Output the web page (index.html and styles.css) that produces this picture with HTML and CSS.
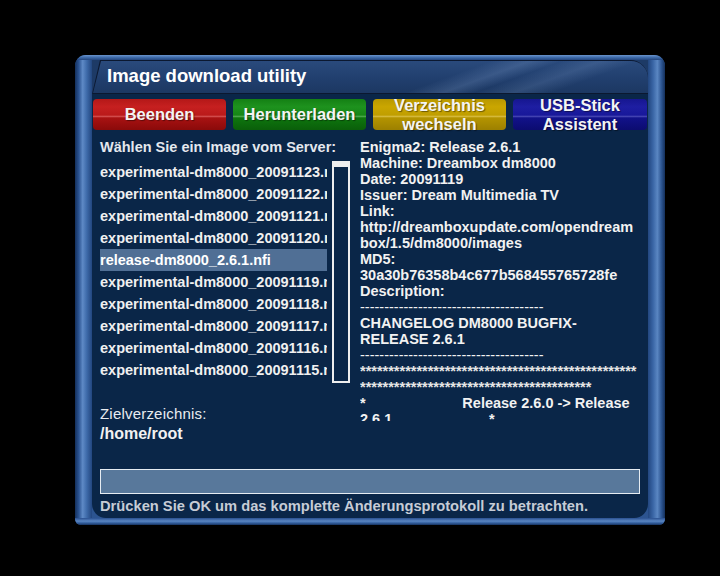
FILE: index.html
```html
<!DOCTYPE html>
<html lang="de">
<head>
<meta charset="utf-8">
<title>Image download utility</title>
<link rel="stylesheet" href="styles.css">
</head>
<body>
<div class="frame">
  <div class="edge edge-top"></div>
  <div class="edge edge-left"></div>
  <div class="panel">
    <div class="title-row">
      <div class="title-outline">
        <div class="title">Image download utility</div>
      </div>
    </div>
    <div class="body">
      <div class="buttons">
        <div class="btn red">Beenden</div>
        <div class="btn green">Herunterladen</div>
        <div class="btn yellow">Verzeichnis<br>wechseln</div>
        <div class="btn blue">USB-Stick<br>Assistent</div>
      </div>
      <div class="main">
        <div class="left">
          <div class="label">Wählen Sie ein Image vom Server:</div>
          <div class="listwrap">
            <ul class="list">
              <li>experimental-dm8000_20091123.nfi</li>
              <li>experimental-dm8000_20091122.nfi</li>
              <li>experimental-dm8000_20091121.nfi</li>
              <li>experimental-dm8000_20091120.nfi</li>
              <li class="selected">release-dm8000_2.6.1.nfi</li>
              <li>experimental-dm8000_20091119.nfi</li>
              <li>experimental-dm8000_20091118.nfi</li>
              <li>experimental-dm8000_20091117.nfi</li>
              <li>experimental-dm8000_20091116.nfi</li>
              <li>experimental-dm8000_20091115.nfi</li>
            </ul>
            <div class="scrollbar"><div class="thumb"></div></div>
          </div>
          <div class="dest-label">Zielverzeichnis:</div>
          <div class="dest">/home/root</div>
        </div>
        <div class="info">
          <div class="line">Enigma2: Release 2.6.1</div>
          <div class="line">Machine: Dreambox dm8000</div>
          <div class="line">Date: 20091119</div>
          <div class="line">Issuer: Dream Multimedia TV</div>
          <div class="line">Link:</div>
          <div class="line">http://dreamboxupdate.com/opendream</div>
          <div class="line">box/1.5/dm8000/images</div>
          <div class="line">MD5:</div>
          <div class="line">30a30b76358b4c677b568455765728fe</div>
          <div class="line">Description:</div>
          <div class="line thin">--------------------------------------</div>
          <div class="line">CHANGELOG DM8000 BUGFIX-</div>
          <div class="line">RELEASE 2.6.1</div>
          <div class="line thin">--------------------------------------</div>
          <div class="line stars">*************************************************</div>
          <div class="line stars">*****************************************</div>
          <div class="line pre"><span class="star">*</span>                        Release 2.6.0 -&gt; Release</div>
          <div class="line pre">2.6.1                        <span class="star">*</span></div>
        </div>
      </div>
      <div class="progress"></div>
      <div class="hint">Drücken Sie OK um das komplette Änderungsprotokoll zu betrachten.</div>
    </div>
  </div>
  <div class="edge edge-right"></div>
  <div class="edge edge-bottom"></div>
</div>
</body>
</html>
```
FILE: styles.css
```css
html, body {
  margin: 0;
  padding: 0;
  background: #000;
}
body {
  width: 720px;
  height: 576px;
  overflow: hidden;
  font-family: "Liberation Sans", Arial, sans-serif;
  font-weight: bold;
  color: #f2f2f2;
}
.frame {
  width: 590px;
  height: 470px;
  margin: 55px 0 0 75px;
  display: grid;
  grid-template-columns: 17px 1fr 17px;
  grid-template-rows: 5px 1fr 7px;
  border-radius: 11px 11px 6px 6px;
  overflow: hidden;
  background: #2c5490;
}
.edge-top {
  grid-column: 1 / -1;
  background: linear-gradient(to bottom, #6a94cc 0%, #3e6aa8 50%, #24467e 100%);
}
.edge-left {
  background: linear-gradient(to right, #14305c 0%, #2a5290 22%, #5e8ac6 45%, #3f6cab 68%, #22467f 100%);
}
.edge-right {
  background: linear-gradient(to right, #22467f 0%, #3a66a6 30%, #5a86c2 55%, #2c5490 80%, #14305c 100%);
}
.edge-bottom {
  grid-column: 1 / -1;
  background: linear-gradient(to bottom, #2a5090 0%, #5a86c2 45%, #3460a0 70%, #16325e 100%);
}
.panel {
  display: flex;
  flex-direction: column;
  min-height: 0;
}
.title-row {
  height: 34px;
  background: #1d3a66;
}
.title-outline {
  height: 34px;
  box-sizing: border-box;
  padding: 1px 0 1px 1px;
  background: #0b1830;
  clip-path: polygon(8px 0, 100% 0, 100% 100%, 0 100%);
  border-radius: 0 18px 0 0;
}
.title {
  height: 32px;
  line-height: 29px;
  padding-left: 14px;
  font-size: 18.5px;
  color: #ffffff;
  clip-path: polygon(8px 0, 100% 0, 100% 100%, 0 100%);
  border-radius: 0 17px 0 0;
  background:
    linear-gradient(160deg, transparent 62%, rgba(140,170,215,0.22) 68%, transparent 73%, rgba(140,170,215,0.18) 79%, transparent 85%),
    linear-gradient(to bottom, #2a4a7c 0%, #213f6e 55%, #1c3862 100%);
}
.body {
  flex: 1;
  background: #0a2648;
  border-radius: 0 0 14px 14px;
  padding: 5px 1px 0;
  display: flex;
  flex-direction: column;
}
.buttons {
  display: grid;
  grid-template-columns: 133px 133px 133px 134px;
  grid-template-rows: 31px;
  gap: 7px;
  height: 31px;
}
.btn {
  box-sizing: border-box;
  height: 31px;
  border-radius: 4px;
  display: flex;
  align-items: center;
  justify-content: center;
  text-align: center;
  font-size: 16.5px;
  line-height: 19px;
  color: #f4f4f4;
  text-shadow: 1px 1px 1px rgba(0,0,0,0.45);
}
.red {
  background: linear-gradient(to bottom, #b41818 0%, #c62020 25%, #ba1a1a 52%, #d45050 56%, #a81212 61%, #8a0a0a 100%);
}
.green {
  background: linear-gradient(to bottom, #148014 0%, #1e921e 25%, #168616 52%, #50aa50 56%, #0e760e 61%, #0a5e0a 100%);
}
.yellow {
  background: linear-gradient(to bottom, #b89800 0%, #caa600 25%, #c09e00 52%, #d8bc40 56%, #b49400 61%, #9c8000 100%);
}
.blue {
  background: linear-gradient(to bottom, #161690 0%, #1e1ea2 25%, #18189a 52%, #4646b4 56%, #12128a 61%, #0c0c70 100%);
}
.main {
  display: grid;
  grid-template-columns: 260px 280px;
  margin: 9px 0 0 7px;
}
.left {
  display: flex;
  flex-direction: column;
}
.label {
  font-size: 14.5px;
  line-height: 16px;
  color: #e4e8ee;
}
.listwrap {
  display: flex;
  gap: 5px;
  margin-top: 6px;
  height: 222px;
}
.list {
  list-style: none;
  margin: 0;
  padding: 0;
  width: 227px;
  height: 220px;
}
.list li {
  height: 22px;
  line-height: 22px;
  font-size: 14.5px;
  white-space: nowrap;
  overflow: hidden;
  color: #f0f0f0;
}
.list li.selected {
  background: #506f95;
  color: #ffffff;
}
.scrollbar {
  width: 18px;
  box-sizing: border-box;
  border: 2px solid #eeeeee;
}
.thumb {
  height: 4px;
  background: #eeeeee;
}
.dest-label {
  margin-top: 21px;
  font-size: 15px;
  line-height: 20px;
  font-weight: normal;
  letter-spacing: 0.2px;
  color: #e8ecf0;
}
.dest {
  font-size: 16px;
  line-height: 20px;
  color: #f2f2f2;
}
.info {
  height: 282px;
  overflow: hidden;
  font-size: 14.5px;
  line-height: 16px;
  color: #f2f2f2;
}
.line {
  white-space: nowrap;
}
.line.thin {
  font-weight: normal;
}
.line.stars {
  color: #e6e6e6;
}
.line.pre {
  white-space: pre;
}
.progress {
  margin: 25px 0 0 7px;
  width: 540px;
  height: 25px;
  box-sizing: border-box;
  border: 1px solid #e6ecf2;
  background: #58789b;
}
.hint {
  margin: 3px 0 0 7px;
  font-size: 14.7px;
  line-height: 18px;
  color: #c6ccd6;
}
```
